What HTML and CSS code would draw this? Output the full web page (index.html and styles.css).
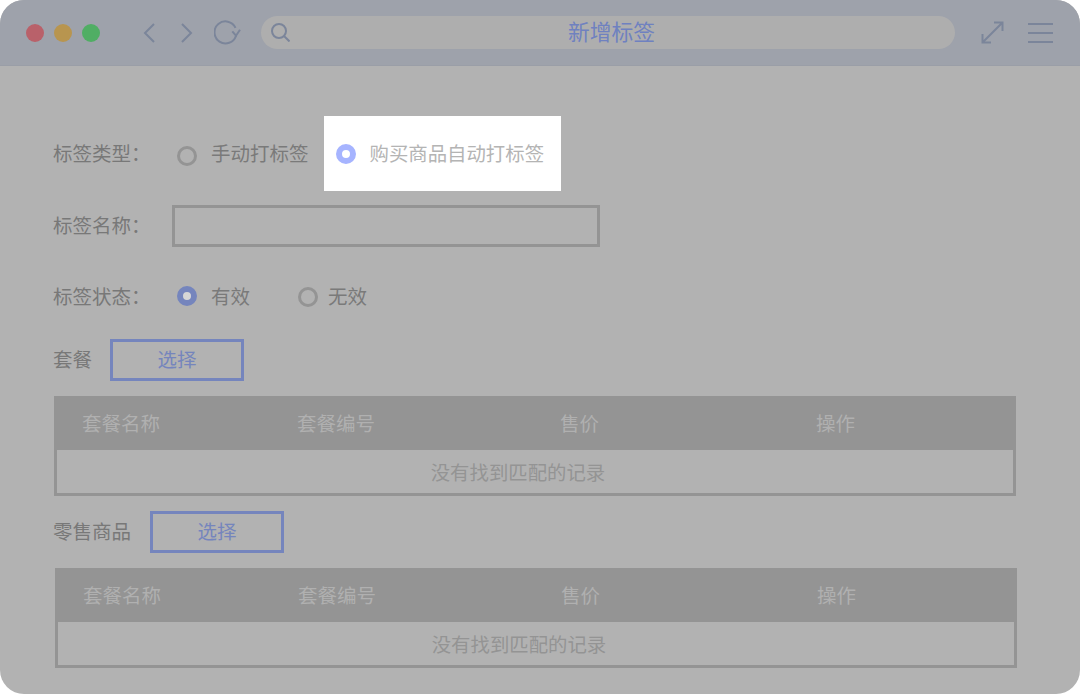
FILE: index.html
```html
<!DOCTYPE html>
<html lang="zh-CN">
<head>
<meta charset="utf-8">
<title>新增标签</title>
<link rel="stylesheet" href="styles.css">
</head>
<body>
<div class="window">
  <header class="toolbar">
    <div class="lights">
      <span class="light red"></span><span class="light orange"></span><span class="light green"></span>
    </div>
    <svg class="ic ic-back" width="12" height="20" viewBox="0 0 12 20"><path d="M11 1 2 10l9 9"/></svg>
    <svg class="ic ic-fwd" width="12" height="20" viewBox="0 0 12 20"><path d="M1 1l9 9-9 9"/></svg>
    <svg class="ic ic-reload" width="27" height="25" viewBox="0 0 27 25"><path d="M22 15.700A11 11 0 1 1 21.500 7.800"/><path d="M18.300 11.300 22 15.700l4-6"/></svg>
    <div class="address">
      <svg class="ic ic-search" width="19" height="19" viewBox="0 0 19 19"><circle cx="8" cy="8" r="7"/><path d="M13 13l5.500 5.500"/></svg>
      <span class="address-title">新增标签</span>
    </div>
    <svg class="ic ic-expand" width="23" height="23" viewBox="0 0 23 23"><path d="M1.500 21.500 21.500 1.500M13 1.500h8.500V10M1.500 13v8.500H10"/></svg>
    <svg class="ic ic-menu" width="25" height="20" viewBox="0 0 25 20"><path d="M0 1h25M0 10h25M0 19h25"/></svg>
  </header>
  <main class="content">
    <div class="row row-type">
      <span class="label label-radio">标签类型：</span>
      <span class="radio"></span><span class="opt">手动打标签</span>
      <div class="spotlight">
        <span class="radio radio-on-light"></span><span class="opt opt-light">购买商品自动打标签</span>
      </div>
    </div>
    <div class="row row-name">
      <span class="label label-input">标签名称：</span>
      <span class="input"></span>
    </div>
    <div class="row row-status">
      <span class="label label-radio">标签状态：</span>
      <span class="radio radio-on"></span><span class="opt">有效</span>
      <span class="radio radio-second"></span><span class="opt opt-tight">无效</span>
    </div>
    <div class="row row-pick">
      <span class="label label-short">套餐</span>
      <span class="btn">选择</span>
    </div>
    <div class="table">
      <div class="thead"><span>套餐名称</span><span>套餐编号</span><span>售价</span><span>操作</span></div>
      <div class="tbody">没有找到匹配的记录</div>
    </div>
    <div class="row row-pick">
      <span class="label">零售商品</span>
      <span class="btn">选择</span>
    </div>
    <div class="table table-second">
      <div class="thead"><span>套餐名称</span><span>套餐编号</span><span>售价</span><span>操作</span></div>
      <div class="tbody">没有找到匹配的记录</div>
    </div>
  </main>
</div>
</body>
</html>
```
FILE: styles.css
```css
* { box-sizing: border-box; }
html, body { margin: 0; height: 100%; background: #fff; }
body { font-family: "Noto Sans CJK SC", "Liberation Sans", sans-serif; font-size: 19.500px; line-height: 26px; color: #787878; overflow: hidden; }
.window { width: 1080px; height: 694px; border-radius: 24px; overflow: hidden; background: #b2b2b2; }

.toolbar { height: 66px; background: #9ea2ab; border-bottom: 1px solid #9a9ea7; display: flex; align-items: center; padding-left: 26px; }
.lights { display: flex; gap: 10px; }
.light { width: 18px; height: 18px; border-radius: 50%; }
.red { background: #b9616a; }
.orange { background: #b8954f; }
.green { background: #50ae64; }
.ic { fill: none; stroke: #7b859a; stroke-width: 2; flex: none; }
.ic-back { margin-left: 43px; }
.ic-fwd { margin-left: 26px; }
.ic-reload { margin-left: 21px; }
.address { margin-left: 20px; width: 694px; height: 33px; border-radius: 16.500px; background: #aeaeae; display: flex; align-items: center; position: relative; padding-left: 10px; }
.address-title { position: absolute; left: 307px; top: 2px; color: #6f81c0; font-size: 21.750px; }
.ic-expand { margin-left: 26px; }
.ic-menu { margin-left: 24px; }

.content { padding: 50px 0 0 53px; }
.row { display: flex; align-items: center; }
.row-type { height: 75px; }
.row-name { height: 42px; margin-top: 14px; }
.row-status { height: 42px; margin-top: 29px; }
.row-pick { height: 42px; margin-top: 15px; }
.row-status + .row-pick { margin-top: 21px; }
.label, .opt { padding-bottom: 2px; }
.label-radio { width: 124px; }
.label-input { width: 119px; }
.row-pick .label { margin-right: 19px; }
.row-pick .label-short { margin-right: 18px; }

.radio { width: 20px; height: 20px; border: 3px solid #949494; border-radius: 50%; position: relative; top: 2px; flex: none; }
.radio-on { border: 6.500px solid #7585bd; background: #d6d6d6; top: -1px; }
.radio-on-light { border: 6.500px solid #a6b4ff; background: #fff; top: 0; }
.radio-second { margin-left: 48px; top: 0; }
.opt { margin-left: 14px; color: #7a7a7a; }
.opt-tight { margin-left: 10px; }
.opt-light { margin-left: 14px; color: #b4b4b4; font-size: 19.400px; }
.spotlight { margin-left: 15px; height: 75px; width: 237px; background: #fff; display: flex; align-items: center; padding-left: 12px; }

.input { width: 428px; height: 42px; border: 3px solid #949494; }
.btn { width: 134px; height: 42px; padding-bottom: 2px; border: 3px solid #7585bd; color: #7585bd; display: flex; align-items: center; justify-content: center; }

.table { width: 962px; height: 100px; margin: 15px 0 0 1px; border: 3px solid #949494; border-top: 0; color: #949494; }
.table-second { margin-left: 2px; }
.thead { height: 54px; margin: 0 -3px; padding-left: 28px; background: #949494; color: #b0b0b0; display: grid; grid-template-columns: 215px 263px 256px 1fr; align-items: center; }
.tbody { height: 43px; text-align: center; line-height: 43px; padding-right: 34px; font-size: 19.400px; }
```
